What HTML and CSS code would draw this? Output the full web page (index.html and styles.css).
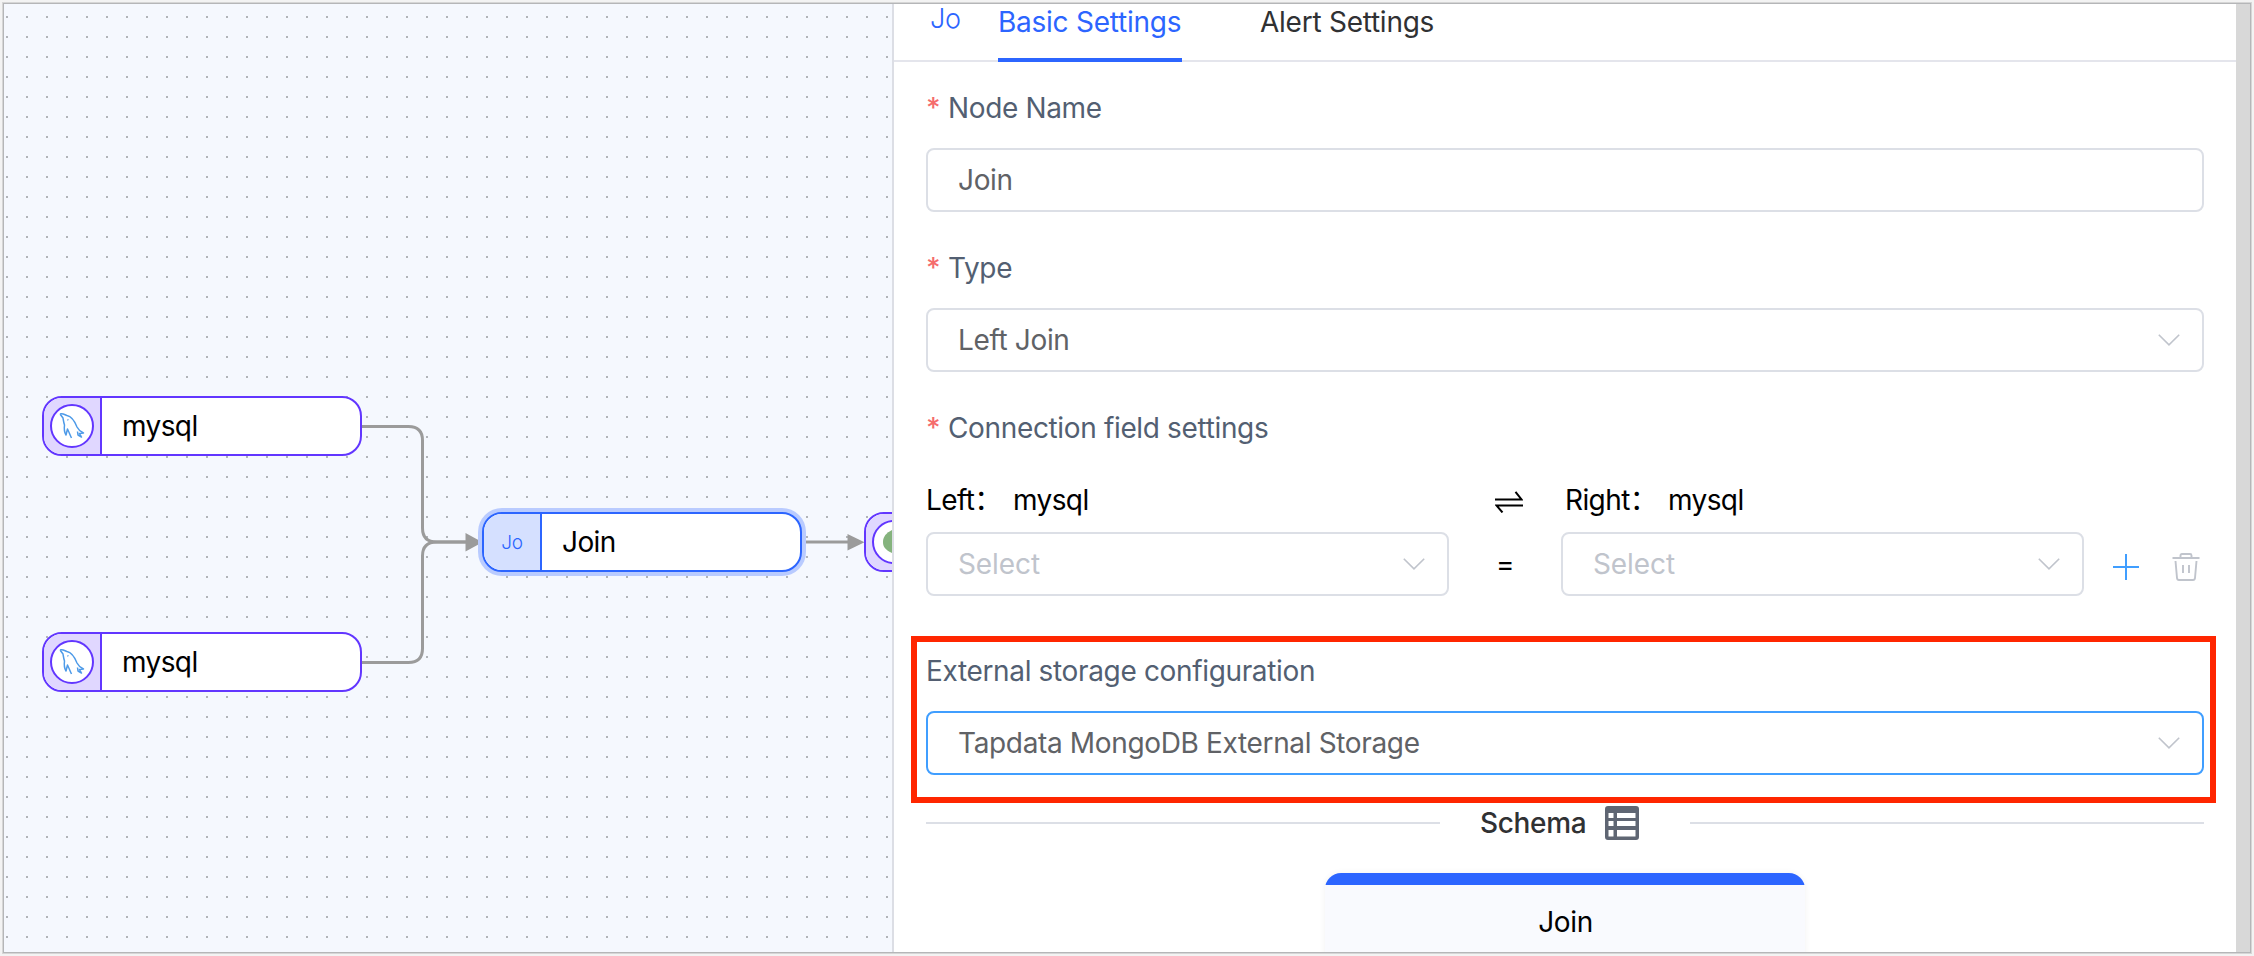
FILE: index.html
```html
<!DOCTYPE html>
<html lang="en">
<head>
<meta charset="utf-8">
<title>Join node settings</title>
<link rel="stylesheet" href="styles.css">
</head>
<body>
<main class="window">
  <section class="canvas">
    <svg class="edges" viewBox="4 4 888 948" width="888" height="948" fill="none" stroke="#9b9b9b" stroke-width="3">
      <path d="M362 426.500H408.500Q422.500 426.500 422.500 440.500V528Q422.500 542 436.500 542H468"/>
      <path d="M362 662.500H408.500Q422.500 662.500 422.500 648.500V556Q422.500 542 436.500 542H468"/>
      <path d="M802 542H850"/>
      <path d="M465.500 533v18.500l17-9.250zM847.500 534v16.500l17-8.250z" fill="#9b9b9b" stroke="none"/>
    </svg>
    <div class="node source-a">
      <div class="node-icon"><span class="node-badge"><svg width="26" height="28" viewBox="0 0 26 28" fill="none" stroke="#4d9ae8" stroke-width="1.500" stroke-linejoin="round"><path d="M1 2C4 1 6 3 8 3.500C13 4.500 16 10 18 15C19.500 18 21 19.500 24.500 21L20.500 21.500L22.500 25L19 23L18.500 19.500M1 2L4 6C4.500 9 4.500 10 5.500 13C5 17 5 20 7 23L8.500 17C10 20 11 23 12.500 26"/><path d="M8.500 7.500l.8.800"/></svg></span></div>
      <span class="node-title">mysql</span>
    </div>
    <div class="node source-b">
      <div class="node-icon"><span class="node-badge"><svg width="26" height="28" viewBox="0 0 26 28" fill="none" stroke="#4d9ae8" stroke-width="1.500" stroke-linejoin="round"><path d="M1 2C4 1 6 3 8 3.500C13 4.500 16 10 18 15C19.500 18 21 19.500 24.500 21L20.500 21.500L22.500 25L19 23L18.500 19.500M1 2L4 6C4.500 9 4.500 10 5.500 13C5 17 5 20 7 23L8.500 17C10 20 11 23 12.500 26"/><path d="M8.500 7.500l.8.800"/></svg></span></div>
      <span class="node-title">mysql</span>
    </div>
    <div class="node join">
      <div class="node-icon">Jo</div>
      <span class="node-title">Join</span>
    </div>
    <div class="node target">
      <div class="node-icon"><span class="node-badge"><svg width="24" height="28" viewBox="0 0 24 28"><path d="M12 1C5 4 1 8 1 14s4 9 11 12c7-3 11-6 11-12S19 4 12 1z" fill="#85b37d"/></svg></span></div>
    </div>
  </section>
  <section class="panel">
    <header class="tabs">
      <span class="type-mark">Jo</span>
      <span class="tab active">Basic Settings</span>
      <span class="tab">Alert Settings</span>
    </header>
    <div class="form">
      <div class="field">
        <div class="label"><i class="star">*</i><span>Node Name</span></div>
        <div class="input"><span>Join</span></div>
      </div>
      <div class="field">
        <div class="label"><i class="star">*</i><span>Type</span></div>
        <div class="input"><span>Left Join</span><svg class="chevron" viewBox="0 0 22 12"><path d="M.8.8 11 10.800 21.200.8"/></svg></div>
      </div>
      <div class="label"><i class="star">*</i><span>Connection field settings</span></div>
      <div class="join-grid">
        <div class="side"><span class="side-name">Left：</span><span>mysql</span></div>
        <svg class="swap" viewBox="0 0 28 22"><path d="M0 8.500H26.500L20.500.8M28 14.500H1.500L7.500 21.500"/></svg>
        <div class="side right"><span class="side-name">Right：</span><span>mysql</span></div>
        <div class="input empty"><span>Select</span><svg class="chevron" viewBox="0 0 22 12"><path d="M.8.8 11 10.800 21.200.8"/></svg></div>
        <span class="equals">=</span>
        <div class="input empty"><span>Select</span><svg class="chevron" viewBox="0 0 22 12"><path d="M.8.8 11 10.800 21.200.8"/></svg></div>
        <div class="actions">
          <svg width="26" height="26" viewBox="0 0 26 26" stroke="#409eff" stroke-width="2"><path d="M13 0V26M0 13H26"/></svg>
          <svg width="28" height="28" viewBox="0 0 28 28" fill="none" stroke="#c0c4cc" stroke-width="1.900"><path d="M.5 5H27.500M8.500 5V2.500Q8.500 1 10 1H18Q19.500 1 19.500 2.500V5M3.500 8 5 25Q5.200 27 7 27H21Q22.800 27 23 25L24.500 8M11 12V20M17 12V20"/></svg>
        </div>
      </div>
      <div class="storage">
        <div class="label"><span>External storage configuration</span></div>
        <div class="input focus"><span>Tapdata MongoDB External Storage</span><svg class="chevron" viewBox="0 0 22 12"><path d="M.8.8 11 10.800 21.200.8"/></svg></div>
      </div>
      <div class="divider">
        <span class="schema"><span>Schema</span><svg width="34" height="34" viewBox="0 0 34 34"><path fill="#5f6673" fill-rule="evenodd" d="M3 0H31Q34 0 34 3V31Q34 34 31 34H3Q0 34 0 31V3Q0 0 3 0zM3.500 7V12H8.500V7zM12 7V12H30.500V7zM3.500 15V20H8.500V15zM12 15V20H30.500V15zM3.500 24V30.500H8.500V24zM12 24V30.500H30.500V24z"/></svg></span>
      </div>
      <div class="card"><span>Join</span></div>
    </div>
  </section>
  <div class="scrollbar"></div>
</main>
</body>
</html>
```
FILE: styles.css
```css
* {
  box-sizing: border-box;
}

body {
  margin: 0;
  width: 2254px;
  height: 956px;
  padding: 4px;
  overflow: hidden;
  background: #f3f3f3;
  font: 28px/40px Inter, "Noto Sans CJK SC", sans-serif;
  letter-spacing: -0.35px;
  color: #000;
}

.window {
  display: flex;
  width: 2246px;
  height: 948px;
  background: #fff;
  box-shadow: 0 0 0 1px #b5b6b8, 0 0 0 2px #d6d6d6;
}

.canvas {
  position: relative;
  width: 888px;
  overflow: hidden;
  background: #f5f8fe conic-gradient(at 2px 2px, transparent 270deg, #b1b4b9 0) 2px 12px / 20px 20px;
}

.edges {
  display: block;
}

.node {
  position: absolute;
  display: flex;
  width: 320px;
  height: 60px;
  border: 2px solid #6236ff;
  border-radius: 20px;
  background: #fff;
}

.source-a {
  left: 38px;
  top: 392px;
}

.source-b {
  left: 38px;
  top: 628px;
}

.join {
  left: 478px;
  top: 508px;
  border-color: #2c65ff;
  box-shadow: 0 0 0 4px #b9cbff;
}

.target {
  left: 860px;
  top: 508px;
}

.node-icon {
  display: flex;
  align-items: center;
  justify-content: center;
  width: 58px;
  border-right: 2px solid #6236ff;
  border-radius: 18px 0 0 18px;
  background: #e0d7ff;
}

.join .node-icon {
  border-color: #2c65ff;
  background: #d5e0ff;
  color: #2c65ff;
  font-size: 19px;
  font-weight: 300;
  padding-top: 2px;
}

.node-badge {
  display: flex;
  align-items: center;
  justify-content: center;
  width: 44px;
  height: 44px;
  border: 2px solid #6236ff;
  border-radius: 50%;
  background: #fff;
}

.node-title {
  padding-left: 20px;
  line-height: 56px;
  letter-spacing: -0.6px;
}

.panel {
  width: 1344px;
  height: 948px;
  overflow: hidden;
  border-left: 2px solid #dcdee5;
}

.tabs {
  display: flex;
  height: 58px;
  padding-left: 36px;
  border-bottom: 2px solid #e4e5ec;
  line-height: 36px;
}

.type-mark {
  width: 68px;
  color: #2c65ff;
  font-size: 27px;
  font-weight: 300;
  line-height: 30px;
}

.tab {
  height: 58px;
  margin-right: 78px;
  color: #303133;
  letter-spacing: -0.25px;
  white-space: nowrap;
}

.active {
  width: 184px;
  color: #2c65ff;
  border-bottom: 4px solid #2c65ff;
}

.form {
  padding: 26px 32px 0;
}

.field {
  margin-bottom: 36px;
}

.label {
  display: flex;
  margin-bottom: 20px;
  color: #535f72;
}

.star {
  width: 22px;
  color: #f56c6c;
  font-style: normal;
  font-weight: 500;
}

.input {
  display: flex;
  align-items: center;
  justify-content: space-between;
  height: 64px;
  padding: 0 22px 0 30px;
  border: 2px solid #dcdfe6;
  border-radius: 8px;
  color: #606266;
}

.chevron {
  width: 22px;
  height: 12px;
  fill: none;
  stroke: #c0c4cc;
  stroke-width: 1.6;
}

.empty {
  color: #c0c4cc;
  letter-spacing: -0.1px;
}

.focus {
  border-color: #409eff;
}

.join-grid {
  display: grid;
  grid-template-columns: 523px 112px 523px 120px;
  grid-template-rows: 40px 64px;
  row-gap: 12px;
  margin-top: 32px;
}

.side {
  display: flex;
  letter-spacing: -0.6px;
}

.side-name {
  width: 87px;
  white-space: nowrap;
}

.right {
  grid-column: 3 / 5;
  padding-left: 4px;
}

.right .side-name {
  width: 103px;
}

.swap {
  width: 28px;
  height: 22px;
  margin: 11px 0 0 46px;
  fill: none;
  stroke: #000;
  stroke-width: 2;
}

.equals {
  padding-left: 47px;
  line-height: 64px;
}

.actions {
  display: flex;
  align-items: center;
  justify-content: space-between;
  padding: 6px 4px 0 29px;
}

.storage {
  margin: 40px -12px 0 -15px;
  height: 167px;
  padding: 9px 6px 0 9px;
  border: 6px solid #ff2600;
}

.divider {
  display: flex;
  align-items: center;
  height: 34px;
  margin-top: 3px;
}

.divider::before,
.divider::after {
  content: "";
  flex: 1;
  height: 2px;
  background: #dcdfe6;
}

.schema {
  display: flex;
  align-items: center;
  justify-content: space-between;
  width: 159px;
  margin: 0 51px 0 40px;
  color: #303133;
  font-weight: 500;
}

.card {
  width: 480px;
  height: 100px;
  margin: 33px auto 0;
  padding: 29px 0 0 1px;
  border-radius: 16px 16px 0 0;
  background: linear-gradient(#2c65ff 12px, #f9fafe 12px);
  box-shadow: 0 0 6px rgba(0, 0, 0, 0.06);
  text-align: center;
}

.scrollbar {
  width: 14px;
  background: #d8d8d8;
}
```
